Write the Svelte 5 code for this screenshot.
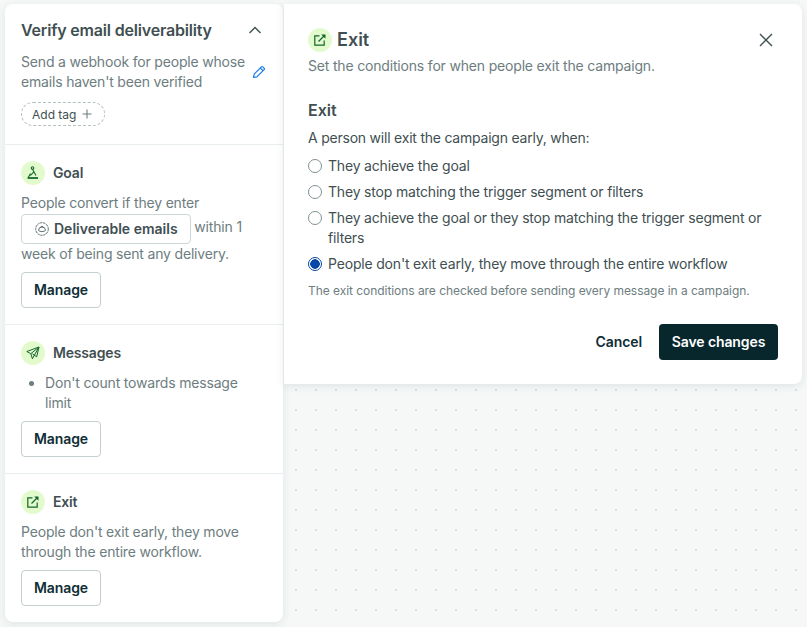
<script lang="ts">
  const radios = [
    { label: 'They achieve the goal', checked: false },
    { label: 'They stop matching the trigger segment or filters', checked: false },
    { label: 'They achieve the goal or they stop matching the trigger segment or filters', checked: false },
    { label: "People don't exit early, they move through the entire workflow", checked: true }
  ];
</script>

{#snippet exitIcon()}
  <svg viewBox="0 0 16 16" width="16" height="16" fill="none" stroke="currentColor" stroke-width="1.2">
    <path d="M7.5 3.800H2.800v9.400h9.400V8.500" />
    <path d="M6.500 9.500l6-6" />
    <path d="M9.200 2.500h4.300v4.300z" fill="currentColor" stroke="none" />
  </svg>
{/snippet}

<div class="page">
  <aside class="side">
    <section class="intro">
      <div class="intro-head">
        <h2>Verify email deliverability</h2>
        <svg class="chevron" viewBox="0 0 14 8" width="14" height="8" fill="none" stroke="#3f4f52" stroke-width="1.4">
          <path d="M1.500 7l5.500-5.500L12.500 7" />
        </svg>
      </div>
      <div class="intro-desc">
        <p>Send a webhook for people whose emails haven't been verified</p>
        <svg class="pencil" viewBox="0 0 14 14" width="14" height="14" fill="none" stroke="#1a7ae8" stroke-width="1.2" stroke-linejoin="round">
          <path d="M1.500 12.500l.7-3.400L9.400 1.900a1 1 0 0 1 1.400 0l1.300 1.300a1 1 0 0 1 0 1.400L4.900 11.800z" />
          <path d="M8.300 3l2.700 2.700" />
        </svg>
      </div>
      <button class="tag">Add tag
        <svg viewBox="0 0 10 10" width="10" height="10" stroke="#6d7d80" stroke-width="1.1"><path d="M5 .5v9M.5 5h9" /></svg>
      </button>
    </section>

    <section>
      <div class="row-head">
        <span class="badge">
          <svg viewBox="0 0 16 16" width="16" height="16" fill="none" stroke="currentColor" stroke-width="1.1">
            <circle cx="7.500" cy="3" r="1.300" />
            <path d="M7.500 4.300L11 10.500M8.800 6.800L5.500 10.500M5.500 8.400L3 13h10" />
            <path d="M3 13h10" stroke-width="1.5" />
          </svg>
        </span>
        <h3>Goal</h3>
      </div>
      <div class="text">
        People convert if they enter
        <span class="chip">
          <svg viewBox="0 0 14 14" width="14" height="14" fill="none" stroke="#5f7073" stroke-width="1">
            <circle cx="7" cy="7" r="6.300" stroke-dasharray="2.400 .6" />
            <path d="M3.500 8.500a3.500 3.500 0 0 1 7 0c-1.800 1.500-5.200 1.500-7 0z" />
            <path d="M5.500 5a2.200 2.200 0 0 1 3 0" />
          </svg>
          Deliverable emails
        </span>
        within 1 week of being sent any delivery.
      </div>
      <button class="manage">Manage</button>
    </section>

    <section>
      <div class="row-head">
        <span class="badge">
          <svg viewBox="0 0 16 16" width="16" height="16" fill="none" stroke="currentColor" stroke-width="1" stroke-linejoin="round">
            <path d="M14 2L1.800 6.500l4 2.200 1.600 5z" />
            <path d="M14 2L5.800 8.700M14 2l-2.300 9.800-4.300-3" />
          </svg>
        </span>
        <h3>Messages</h3>
      </div>
      <ul class="text">
        <li>Don't count towards message limit</li>
      </ul>
      <button class="manage">Manage</button>
    </section>

    <section>
      <div class="row-head">
        <span class="badge">{@render exitIcon()}</span>
        <h3>Exit</h3>
      </div>
      <p class="text">People don't exit early, they move through the entire workflow.</p>
      <button class="manage">Manage</button>
    </section>
  </aside>

  <main class="modal">
    <header class="modal-head">
      <div class="modal-title">
        <span class="badge">{@render exitIcon()}</span>
        <h1>Exit</h1>
      </div>
      <svg class="close" viewBox="0 0 14 14" width="14" height="14" fill="none" stroke="#3f4f52" stroke-width="1.4">
        <path d="M1 1l12 12M13 1L1 13" />
      </svg>
    </header>
    <p class="subtitle">Set the conditions for when people exit the campaign.</p>

    <h2 class="group-title">Exit</h2>
    <p class="lead">A person will exit the campaign early, when:</p>
    <div class="options">
      {#each radios as radio}
        <label class="option">
          <input type="radio" name="exit" checked={radio.checked} />
          <span>{radio.label}</span>
        </label>
      {/each}
    </div>
    <p class="note">The exit conditions are checked before sending every message in a campaign.</p>

    <footer>
      <button class="cancel">Cancel</button>
      <button class="save">Save changes</button>
    </footer>
  </main>
</div>

<style>
  :global(body) {
    font-family: Inter, "Liberation Sans", sans-serif;
    background-color: #f6f8f8;
    background-image: radial-gradient(circle at center, #dadfdf 0.9px, transparent 1.2px);
    background-size: 20px 20px;
    background-position: 6px 0px;
  }

  .page {
    display: flex;
    align-items: flex-start;
    padding: 4px 5px 0;
    height: 623px;
    overflow: hidden;
    color: #3f4f52;
    font-size: 14px;
    line-height: 20px;
    letter-spacing: -0.18px;
  }

  h1, h2, h3, p, ul { margin: 0; padding: 0; }

  .side {
    flex: 0 0 278px;
    background: #fff;
    border-radius: 8px;
    box-shadow: 0 2px 8px rgba(30, 50, 55, 0.1);
  }

  section {
    padding: 16px;
    border-top: 1px solid #e9eeee;
  }

  .intro {
    border-top: 0;
    height: 140px;
    box-sizing: border-box;
  }

  .intro-head {
    display: flex;
    justify-content: space-between;
    align-items: center;
    height: 20px;
    padding-right: 5px;
  }

  .intro-head h2 {
    font-size: 16px;
    font-weight: 600;
    line-height: 20px;
  }

  .intro-desc {
    display: flex;
    align-items: center;
    justify-content: space-between;
    margin-top: 12px;
    color: #6d7d80;
  }

  .intro-desc p { width: 226px; }
  .pencil { margin-right: 1px; }

  .tag {
    display: inline-flex;
    align-items: center;
    gap: 6px;
    height: 24px;
    margin-top: 10px;
    padding: 0 12px 0 10px;
    border: 1px dashed #b4bfc0;
    border-radius: 12px;
    background: #fff;
    color: #3f4f52;
    font: 12px Inter, sans-serif;
  }

  .row-head {
    display: flex;
    align-items: center;
    gap: 8px;
  }

  .badge {
    display: flex;
    align-items: center;
    justify-content: center;
    width: 24px;
    height: 24px;
    border-radius: 50%;
    background: #e3fbcc;
    color: #12652f;
  }

  h3 {
    font-size: 14px;
    font-weight: 600;
  }

  .text {
    margin-top: 8px;
    color: #6d7d80;
  }

  ul.text { padding-left: 24px; }

  .chip {
    display: inline-flex;
    align-items: center;
    gap: 5px;
    box-sizing: border-box;
    height: 30px;
    margin-top: 1px;
    padding: 0 12px 0 13px;
    border: 1px solid #cdd6d7;
    border-radius: 4px;
    color: #3f4f52;
    font-weight: 600;
    letter-spacing: 0;
    vertical-align: middle;
  }

  .manage {
    display: block;
    box-sizing: border-box;
    width: 80px;
    height: 36px;
    margin-top: 8px;
    padding: 0 0 2px;
    border: 1px solid #c3cfd0;
    border-radius: 4px;
    background: #fff;
    color: #0f2e35;
    font: 600 14px Inter, sans-serif;
    letter-spacing: -0.1px;
  }

  .modal {
    flex: 0 0 518px;
    box-sizing: border-box;
    height: 380px;
    margin-left: 1px;
    padding: 24px;
    background: #fff;
    border-radius: 0 8px 8px 0;
    box-shadow: 0 2px 8px rgba(30, 50, 55, 0.1);
  }

  .modal-head {
    display: flex;
    align-items: center;
    justify-content: space-between;
  }

  .modal-title {
    display: flex;
    align-items: center;
    gap: 5px;
  }

  h1 {
    font-size: 18px;
    font-weight: 600;
    line-height: 24px;
    letter-spacing: 0;
  }

  .close { margin-right: 5px; }

  .subtitle {
    margin-top: 4px;
    color: #6d7d80;
  }

  .group-title {
    margin-top: 24px;
    font-size: 16px;
    font-weight: 600;
    letter-spacing: 0;
  }

  .lead {
    margin-top: 8px;
    letter-spacing: -0.22px;
  }

  .options {
    display: flex;
    flex-direction: column;
    gap: 6px;
    margin-top: 8px;
  }

  .option {
    display: flex;
    gap: 6px;
  }

  .option input {
    flex: none;
    width: 14px;
    height: 14px;
    margin: 3px 0 0;
    appearance: none;
    border: 1px solid #7f9194;
    border-radius: 50%;
    background: #fff;
  }

  .option input:checked {
    border-color: #0647a8;
    background: radial-gradient(circle, #0647a8 0 4.5px, #fff 5px);
  }

  .note {
    margin-top: 7px;
    color: #6d7d80;
    font-size: 12px;
    letter-spacing: -0.05px;
  }

  footer {
    display: flex;
    justify-content: flex-end;
    align-items: center;
    gap: 17px;
    margin-top: 23px;
  }

  footer button {
    height: 36px;
    border: 0;
    border-radius: 4px;
    padding-bottom: 2px;
    font: 600 14px Inter, sans-serif;
    letter-spacing: -0.1px;
  }

  .cancel {
    padding-left: 0;
    padding-right: 0;
    background: none;
    color: #0f2e35;
  }

  .save {
    width: 119px;
    background: #08272d;
    color: #fff;
  }
</style>
